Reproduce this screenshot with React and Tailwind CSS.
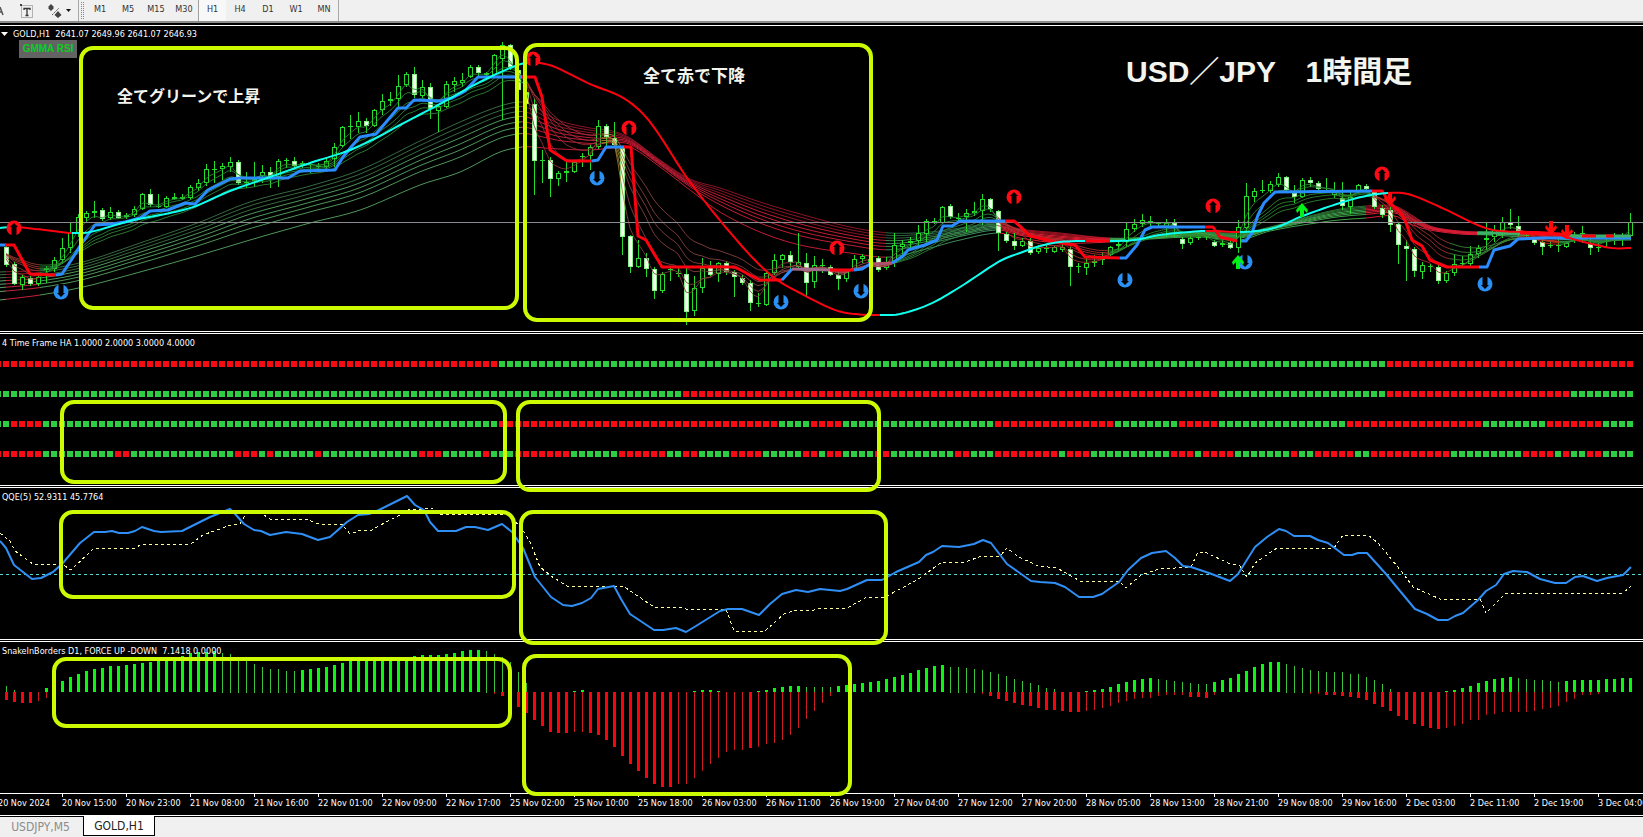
import React from "react";

const STEP = 8;
const FIRST = 6;
const barX = (i) => FIRST + i * STEP;

// [high, bodyTop, bodyBottom, low, filled]
const CANDLES = [
  [245,247,265,267,1],[262,264,284,285,1],[275,277,285,290,0],[276,278,284,286,1],[275,277,284,286,0],[266,268,270,283,0],[257,260,269,272,0],[238,248,260,264,0],
  [222,232,248,253,0],[214,217,233,237,0],[211,213,218,223,0],[201,211,213,218,0],[208,210,219,221,1],[207,212,218,220,0],[210,212,218,219,1],[213,215,217,219,0],
  [206,209,215,217,0],[193,194,209,210,0],[189,194,205,207,1],[194,206,207,208,0],[196,198,207,208,0],[193,197,199,200,0],[194,197,199,200,0],[185,187,198,200,0],
  [179,183,188,191,0],[164,169,183,186,0],[161,169,170,183,0],[163,166,169,180,0],[157,162,167,172,0],[160,162,183,185,1],[172,182,183,188,0],[162,179,181,187,0],
  [165,172,176,183,0],[167,172,177,188,1],[159,161,177,187,0],[158,160,161,168,0],[157,161,166,168,1],[161,163,165,168,0],[163,164,165,173,0],[163,166,167,172,0],
  [158,161,167,170,0],[143,147,159,167,0],[126,127,146,147,0],[115,126,127,139,0],[112,121,127,133,0],[118,121,126,133,1],[109,110,126,127,0],[94,101,110,115,0],
  [92,99,101,106,0],[75,86,99,107,0],[72,74,85,87,0],[67,74,95,98,1],[80,87,96,98,0],[83,87,109,119,1],[105,106,111,132,0],[81,84,107,108,0],
  [77,81,85,92,0],[73,80,83,87,0],[65,67,77,78,0],[65,67,73,77,1],[72,73,75,80,0],[54,55,75,77,0],[42,45,59,120,0],[44,45,67,70,1],
  [66,70,90,92,1],[86,92,104,106,1],[98,104,161,195,1],[150,160,161,183,0],[157,160,179,197,1],[171,173,179,186,0],[162,171,173,182,0],[160,162,172,173,0],
  [153,156,157,167,0],[145,147,156,170,0],[120,126,147,149,0],[124,126,137,148,1],[122,138,145,147,1],[147,148,237,255,1],[235,236,267,273,1],[240,258,267,268,0],
  [253,258,269,277,1],[267,269,291,299,1],[272,274,291,293,0],[268,269,270,281,0],[268,273,274,277,0],[268,274,312,325,1],[276,288,311,316,0],[258,268,288,293,0],
  [261,267,275,276,1],[262,263,274,282,0],[261,263,272,275,1],[270,272,277,297,1],[275,278,283,285,1],[280,283,303,311,1],[293,303,304,307,0],[272,273,305,306,0],
  [254,260,273,275,0],[254,255,260,268,0],[251,255,262,270,1],[233,262,267,269,0],[253,263,283,296,1],[256,265,282,288,0],[259,265,266,273,0],[265,267,275,276,1],
  [272,275,279,290,1],[270,272,279,282,0],[255,259,269,270,0],[254,256,259,263,0],[253,259,262,270,0],[256,258,270,272,1],[257,263,268,270,0],[233,245,263,267,0],
  [240,244,247,258,0],[237,241,243,250,0],[225,233,241,247,0],[219,221,234,242,0],[218,221,223,224,1],[206,207,223,224,0],[204,206,217,219,1],[213,218,219,223,0],
  [209,213,217,232,0],[202,211,213,216,0],[194,199,211,225,0],[198,199,209,212,1],[210,211,233,251,1],[232,234,241,243,1],[233,241,246,250,1],[238,241,246,247,0],
  [238,241,253,255,1],[245,248,252,254,0],[245,248,249,253,0],[246,247,252,253,0],[244,247,250,252,0],[247,249,267,286,1],[263,266,267,273,0],[257,263,268,275,0],
  [255,261,263,267,0],[252,257,260,265,0],[246,247,255,256,0],[240,244,246,250,0],[222,229,242,247,0],[219,224,229,232,0],[214,220,224,227,0],[216,221,222,228,0],
  [222,223,224,228,0],[219,223,228,237,0],[219,223,228,237,1],[237,239,244,249,1],[233,238,243,245,0],[233,237,238,240,0],[234,236,237,240,0],[240,242,246,247,1],
  [240,243,245,247,0],[241,243,248,249,1],[220,227,248,253,0],[183,196,228,231,0],[188,191,197,202,0],[180,190,191,193,0],[181,184,191,193,0],[173,177,185,187,0],
  [176,177,190,191,1],[185,193,197,203,1],[178,180,197,198,0],[177,180,183,187,1],[181,183,189,191,1],[178,190,191,192,0],[182,192,195,198,0],[182,198,206,210,1],
  [192,197,207,214,0],[184,185,191,192,0],[184,186,189,190,1],[190,192,207,209,1],[205,208,215,218,1],[207,210,225,232,1],[222,224,245,264,1],[240,246,249,281,1],
  [247,249,271,277,1],[262,265,272,279,0],[264,266,267,272,0],[265,267,281,284,1],[271,273,281,283,0],[255,264,273,276,0],[256,263,264,268,0],[246,254,264,267,0],
  [245,248,254,258,0],[222,238,240,250,0],[225,230,237,242,0],[217,222,231,238,0],[209,222,225,229,1],[216,226,231,237,1],[232,235,236,238,0],[237,239,243,245,1],
  [237,242,247,255,1],[240,245,246,248,0],[237,245,246,252,0],[241,243,247,248,0],[232,236,237,243,0],[226,233,234,243,0],[237,244,248,255,1],[242,247,248,252,0],
  [235,238,239,248,0],[233,236,237,245,0],[233,236,237,246,0],[213,222,236,240,0],
];

// Long-term ribbon envelope: [x, top, bottom]
const RIBBON = [
  [0,272,300],[40,270,295],[83,262,287],[140,243,272],[200,222,255],[250,202,240],[310,186,223],[360,170,210],[420,141,185],[460,122,172],
  [500,106,152],[522,102,147],[533,106,147],[545,113,148],[560,121,149],[590,128,150],[612,131,148],[630,138,147],[660,160,167],[690,179,190],
  [720,188,212],[760,202,232],[800,214,245],[850,227,253],[890,233,257],[930,232,248],[960,228,240],[998,223,233],[1020,229,238],[1060,233,243],
  [1110,238,242],[1150,237,239],[1200,232,237],[1240,233,240],[1270,227,231],[1330,211,221],[1366,206,218],[1395,206,216],[1410,214,224],
  [1430,226,230],[1460,231,234],[1490,232,235],[1540,232,238],[1580,235,240],[1631,236,240],
];

const LONG_RANGES = [
  [0,6,"#5f9f6b"],[6,40,"#c8203a"],[40,522,"#4f965a"],[522,886,"#c01c34"],[886,998,"#3f8a58"],[998,1110,"#e01c30"],[1110,1366,"#3fa04a"],[1366,1477,"#d81c34"],[1477,1525,"#3fa860"],[1525,1560,"#e01c20"],[1560,1631,"#3fa860"],
];
const SHORT_RANGES = [
  [6,40,"#9a3a30"],[40,526,"#2f8a38"],[526,602,"#9a3038"],[602,626,"#a08030"],[626,792,"#8a4444"],[792,896,"#a04a50"],[896,998,"#2f8a40"],[998,1110,"#b03030"],[1110,1374,"#2f8a30"],[1374,1450,"#a83030"],[1450,1518,"#3f8a3a"],[1518,1560,"#c03020"],[1560,1630,"#2f8a3a"],
];

// Cubic Hermite interpolation through the given points
function sample(points, x) {
  const last = points.length - 1;
  let i = 1;
  while (i < last && x > points[i][0]) i++;
  const slope = (n) => {
    const a = points[Math.max(0, n - 1)];
    const b = points[Math.min(last, n + 1)];
    return (b[1] - a[1]) / (b[0] - a[0]);
  };
  const [x0, y0] = points[i - 1];
  const [x1, y1] = points[i];
  const w = x1 - x0;
  const t = Math.min(1, Math.max(0, (x - x0) / w));
  const t2 = t * t;
  const t3 = t2 * t;
  return (2 * t3 - 3 * t2 + 1) * y0 + (t3 - 2 * t2 + t) * w * slope(i - 1) + (3 * t2 - 2 * t3) * y1 + (t3 - t2) * w * slope(i);
}

function slice(points, from, to) {
  const out = [];
  for (let x = from; x < to; x += 4) out.push(`${x},${sample(points, x).toFixed(1)}`);
  out.push(`${to},${sample(points, to).toFixed(1)}`);
  return out.join(" ");
}

function average(period) {
  const k = 2 / (period + 1);
  let value = 252;
  return CANDLES.map(([, top, bottom, , filled], i) => {
    value += k * ((filled ? bottom : top) - value);
    return [barX(i), value];
  });
}

const LONG_LINES = [0, 0.1, 0.21, 0.32, 0.44, 0.56, 0.7, 1].map((t) => RIBBON.map(([x, a, b]) => [x, a + (b - a) * t]));
const SHORT_LINES = [3, 5, 8, 10, 12, 15].map(average);

const BLUE = "#2b8cff";
const RED = "#ff0010";
const CYAN = "#10ffee";

const TREND = [
  [BLUE, "0,245 6,245"],
  [RED, "5,245 14,245 30,274 56,275"],
  [BLUE, "56,275 62,274 72,259 80,246 95,225 112,224 125,222 140,218 150,211 168,210 185,203 195,204 208,190 230,179 240,178 288,178 300,171 335,170 343,157 352,146 360,137 376,134 398,108 406,108 414,100 440,101 452,98 465,91 478,77 522,77"],
  [RED, "522,77 535,77 542,97 550,150 567,161 592,161"],
  [BLUE, "592,161 598,160 606,147 624,147"],
  [RED, "624,147 631,147 638,236 646,240 662,267 735,267 750,275 760,280 782,280"],
  [BLUE, "782,280 792,269"],
  ["#a06a8c", "792,269 830,270"],
  [RED, "830,270 854,270"],
  [BLUE, "854,270 862,269 870,264"],
  ["#b0506c", "870,264 892,263"],
  [BLUE, "892,263 903,256 908,250 925,245 937,240 943,226 952,226 960,221 1005,221"],
  [RED, "1005,221 1014,221 1022,228 1030,236 1060,243 1075,245 1085,257 1120,258"],
  [BLUE, "1120,258 1126,258 1137,245 1145,230 1152,227 1205,227"],
  [RED, "1205,227 1213,227 1220,237 1237,241"],
  [BLUE, "1241,241 1246,241 1252,233 1258,215 1264,203 1275,192 1372,191"],
  [RED, "1372,191 1382,191 1390,203 1400,212 1405,220 1412,240 1422,246 1430,260 1447,267 1479,267"],
  [BLUE, "1479,267 1487,267 1494,250 1510,246 1518,239 1540,238 1631,238"],
  ["#3fb06a", "1478,233 1520,233"],
  [RED, "1520,233 1560,234 1568,238"],
  ["#3fb06a", "1568,236 1631,236"],
  [RED, "1582,236 1596,236"],
  [RED, "1606,236 1614,236"],
];

const BASE = [
  [0,228],[15,227],[45,230],[72,233],[90,232],[130,221],[190,208],[230,191],[270,177],[310,163],[350,150],[380,136],[400,125],[440,104],
  [480,82],[510,68],[525,63],[540,63],[555,67],[590,84],[625,99],[650,122],[690,182],[740,244],[772,276],[800,293],[835,310],[855,314],
  [880,315],[900,314],[930,304],[960,287],[1000,261],[1020,253],[1040,246],[1060,242],[1085,241],[1110,241],[1135,240],[1160,235],
  [1205,231],[1240,232],[1265,230],[1280,226],[1300,217],[1340,203],[1366,196],[1388,193],[1408,194],[1440,207],[1480,226],[1500,231],
  [1550,233],[1580,241],[1612,248],[1631,248],
];
const BASE_RANGES = [
  [0,15,CYAN],[15,72,RED],[72,536,CYAN],[536,880,RED],[880,1085,CYAN],[1085,1110,RED],[1110,1205,CYAN],[1205,1240,RED],[1240,1388,CYAN],[1388,1631,RED],
];

const SELL_MARKS = [[14,228],[533,59],[629,128],[837,248],[1014,197],[1213,206],[1382,174]];
const BUY_MARKS = [[61,292],[597,178],[781,302],[861,291],[1125,280],[1245,262],[1485,284]];
const UP_ARROWS = [[1238,262],[1302,210]];
const DOWN_ARROWS = [[1390,199],[1551,228],[1567,232]];

const HA_ROWS = [
  { y: 364, ends: [["r",61],["g",172],["r",203]] },
  { y: 394, ends: [["g",84],["r",151],["g",172],["r",195],["g",203]] },
  { y: 424, ends: [["g",0],["r",4],["g",61],["r",96],["g",100],["r",104],["g",123],["r",138],["g",146],["r",151],["g",167],["r",184],["g",192],["r",199],["g",203]] },
  { y: 454, ends: [["r",4],["g",13],["r",15],["g",28],["r",31],["g",32],["r",33],["g",38],["r",39],["g",51],["r",54],["g",59],["r",60],["g",63],["r",70],["g",76],["r",82],["g",84],["r",86],["g",90],["r",94],["g",99],["r",101],["g",102],["r",104],["g",108],["r",110],["g",118],["r",120],["g",123],["r",131],["g",132],["r",135],["g",145],["r",148],["g",149],["r",153],["g",160],["r",161],["g",163],["r",168],["g",170],["r",180],["g",189],["r",193],["g",194],["r",195],["g",197],["r",199],["g",203]] },
];

const QQE_FAST =
  "0,541 6,548 14,565 32,579 41,578 53,572 62,564 80,543 94,532 105,532 112,531 119,533 128,533 135,531 142,527 154,531 161,532 182,531 196,524 210,517 230,509 236,515 244,524 254,530 261,531 270,535 286,532 302,534 318,540 330,537 347,522 358,515 369,514 379,510 395,502 407,496 415,505 424,510 430,522 438,531 456,531 466,527 475,527 488,530 502,524 512,532 523,548 535,577 551,597 563,605 572,606 582,603 591,598 598,589 614,586 621,599 630,614 654,630 663,630 676,628 686,632 696,626 720,611 728,609 742,609 759,615 770,604 782,594 796,590 808,592 820,589 840,591 847,589 867,580 882,580 896,572 919,562 926,555 933,552 942,546 959,547 974,544 983,540 991,543 1007,564 1031,581 1040,582 1055,583 1065,587 1079,597 1093,597 1102,594 1119,582 1128,570 1141,558 1152,553 1166,551 1175,558 1183,566 1191,567 1209,573 1230,581 1238,574 1255,547 1267,537 1279,529 1286,531 1294,536 1310,536 1318,540 1328,543 1344,555 1352,555 1358,553 1367,553 1386,574 1400,591 1415,609 1427,614 1438,620 1448,620 1455,616 1463,613 1478,600 1486,591 1496,585 1504,574 1513,571 1527,572 1540,579 1555,583 1566,583 1575,577 1583,576 1597,581 1607,578 1623,575 1631,567";
const QQE_SLOW =
  "0,533 10,541 15,551 33,564 62,564 71,570 94,548 135,548 142,544 191,544 203,535 228,526 240,524 244,517 250,512 261,513 270,519 305,519 319,524 342,524 350,534 361,530 372,530 386,522 400,515 408,510 425,509 432,508 438,514 507,514 521,527 530,542 540,567 551,576 567,586 623,586 654,607 682,607 686,609 726,609 734,631 765,631 784,614 796,610 814,610 821,608 847,608 867,597 886,597 896,591 917,580 942,562 965,562 982,556 1000,556 1007,548 1019,557 1038,566 1057,568 1080,581 1119,581 1126,588 1141,575 1159,569 1191,567 1198,552 1205,552 1228,563 1240,566 1247,577 1255,563 1277,548 1334,548 1343,535 1368,535 1378,543 1402,572 1413,587 1440,599 1480,599 1486,613 1505,594 1511,593 1623,593 1631,586";

// Histogram runs: [first bar, wide bars?, bar ends measured from the zero line]
const FORCE_UP = [
  [0,0,[6,2]],[5,1,[4]],
  [7,1,[11,15,18,21,23,24,26,26,27,28,29,30,31,32,33,36,39,40,40,41]],
  [27,0,[39,38,34,31,28,25,23,23,21,21]],
  [37,1,[22,23,24,25,27,29,31,32,33,33,34,34,35,35,36,37,37,37,38,39,41,42,42]],
  [60,0,[41,38,35,30,20,9]],
  [71,1,[1,2]],[86,1,[1,2,2,1]],[94,1,[1,2,4,5,6,6]],[100,0,[5,5,5,5]],
  [104,1,[6,7,8,9,10,11,13,15,17,19,22,24,26,27]],
  [118,0,[25,25,24,23,22,20,18,16,13,11,9,7,4,3]],
  [135,1,[1,2,3,5,8,10,12,13,14]],[144,0,[13,12,11,10,9,8,8]],
  [151,1,[10,12,14,18,21,25,28,30,30]],[160,0,[28,26,24,22,21,20,20,20,18,18,15,12,8,3]],
  [180,1,[1,2,4,6,9,11,13,14,15]],[189,0,[14,13,12,12,11,10]],[195,1,[11,12,12,12,12,13,13,14,14]],
];
const FORCE_DOWN = [
  [0,1,[8,10,11,11]],[4,0,[9,6]],[61,0,[2]],[62,1,[4,9,15,21,28,34,40,41,41]],
  [71,0,[40,40]],[73,1,[41,43,48,55,64,72,79,86,92,95,95]],
  [84,0,[92,92,86,79,72,66,60,58,58]],[93,1,[56]],
  [94,0,[55,52,51,48,43,36,27,19,11,4]],
  [122,0,[2]],[123,1,[4,7,9,11,13,14,16,18,18,19,20,20]],
  [135,0,[19,18,16,14,11,9,7,6,6,4,3,3,3]],[148,1,[5,5,6]],[151,0,[3]],
  [163,0,[2,2]],[165,1,[3,3,4,5,6,8,12,15,19,24,28,32,34,36,37]],
  [180,0,[36,34,32,28,28,23,22,20,20,20,20,19,17,16,14,10,7,3,3,2]],
];

const TIMES = [
  "20 Nov 2024","20 Nov 15:00","20 Nov 23:00","21 Nov 08:00","21 Nov 16:00","22 Nov 01:00","22 Nov 09:00","22 Nov 17:00","25 Nov 02:00",
  "25 Nov 10:00","25 Nov 18:00","26 Nov 03:00","26 Nov 11:00","26 Nov 19:00","27 Nov 04:00","27 Nov 12:00","27 Nov 20:00","28 Nov 05:00",
  "28 Nov 13:00","28 Nov 21:00","29 Nov 08:00","29 Nov 16:00","2 Dec 03:00","2 Dec 11:00","2 Dec 19:00","3 Dec 04:00",
];

const PERIODS = ["M1", "M5", "M15", "M30", "H1", "H4", "D1", "W1", "MN"];

const UI = "font-['DejaVu_Sans_Condensed','DejaVu_Sans',sans-serif]";
const JP = "font-['Noto_Sans_CJK_JP',sans-serif]";

function Lines({ items, width }) {
  return items.map(([color, points], i) => (
    <polyline key={i} points={points} fill="none" stroke={color} strokeWidth={width} strokeLinejoin="round" />
  ));
}

function Candle({ i, data }) {
  const [high, top, bottom, low, filled] = data;
  const x = barX(i);
  const flat = bottom - top < 3;
  return (
    <g shapeRendering="crispEdges">
      <rect x={x} y={high} width="1" height={low - high} fill="#22dd2a" />
      {flat ? (
        <rect x={x - 2} y={top} width="5" height={bottom - top} fill="#22dd2a" />
      ) : (
        <rect x={x - 1.5} y={top + 0.5} width="4" height={bottom - top - 1} fill={filled ? "#f4fff0" : "#000"} stroke={filled ? "#8cf08c" : "#22dd2a"} />
      )}
    </g>
  );
}

function Mark({ x, y, down }) {
  return (
    <g transform={`translate(${x} ${y}) scale(1 ${down ? -1 : 1})`}>
      <circle r="7.5" fill={down ? "#2b90f4" : "#ff0a14"} />
      <path d="M0,-5 L4,-1 L2.5,-1 L2.5,8 L-2.5,8 L-2.5,-1 L-4,-1 Z" fill="#000" />
    </g>
  );
}

function Arrow({ x, y, down }) {
  return (
    <g transform={`translate(${x} ${y}) scale(1 ${down ? -1 : 1})`}>
      <path d="M0,-7 L6,0 L5,3 L2,0 L2,7 L-2,7 L-2,0 L-5,3 L-6,0 Z" fill={down ? "#ff0a0a" : "#00f018"} />
    </g>
  );
}

function Highlight({ className }) {
  return <div className={`pointer-events-none absolute rounded-[14px] border-4 border-[#ccfa00] ${className}`} />;
}

function Divider() {
  return <div className="h-[3px] shrink-0 border-y border-white" />;
}

function PricePanel() {
  return (
    <section className="relative h-[305px] overflow-hidden">
      <svg className="block h-full w-full" aria-hidden="true">
        <g transform="translate(0 -26)">
          {LONG_LINES.map((line, k) =>
            LONG_RANGES.map(([a, b, color]) => (
              <polyline key={`${k}-${a}`} points={slice(line, a, b)} fill="none" stroke={color} strokeWidth="1" opacity={k < 3 ? 0.7 : 1} />
            ))
          )}
          {CANDLES.map((data, i) => (
            <Candle key={i} i={i} data={data} />
          ))}
          {SHORT_LINES.map((line, k) =>
            SHORT_RANGES.map(([a, b, color]) => (
              <polyline key={`${k}-${a}`} points={slice(line, a, b)} fill="none" stroke={color} strokeWidth="1" opacity="0.85" />
            ))
          )}
          <rect x="0" y="222" width="100%" height="1" fill="#8a8a90" />
          <Lines items={TREND} width={3} />
          {BASE_RANGES.map(([a, b, color]) => (
            <polyline key={a} points={slice(BASE, a, b)} fill="none" stroke={color} strokeWidth="2" />
          ))}
          {SELL_MARKS.map(([x, y]) => <Mark key={x} x={x} y={y} />)}
          {BUY_MARKS.map(([x, y]) => <Mark key={x} x={x} y={y} down />)}
          {UP_ARROWS.map(([x, y]) => <Arrow key={x} x={x} y={y} />)}
          {DOWN_ARROWS.map(([x, y]) => <Arrow key={x} x={x} y={y} down />)}
        </g>
      </svg>
      <div className="absolute left-0 top-0 flex h-4 items-center pl-[1px] text-[9px] leading-none text-white">
        <svg className="mr-[5px] h-[4px] w-[7px]" viewBox="0 0 7 4" aria-hidden="true"><path d="M0,0 H7 L3.5,4 Z" fill="#fff" /></svg>
        <span className="whitespace-pre">GOLD,H1  2641.07 2649.96 2641.07 2646.93</span>
      </div>
      <div className="absolute left-[19px] top-[14px] flex h-[18px] w-[58px] items-center justify-center bg-[#636363] font-['Liberation_Sans',sans-serif] text-[10px] leading-none font-bold text-[#10cc20]">
        GMMA RSI
      </div>
      <p className={`absolute left-[117px] top-[57px] text-[16px] leading-6 font-bold text-[#f4f4ee] ${JP}`}>全てグリーンで上昇</p>
      <p className={`absolute left-[643px] top-[37px] text-[17px] leading-6 font-bold text-[#f4f4ee] ${JP}`}>全て赤で下降</p>
      <h1 className="absolute left-[1126px] top-[26px] text-[30px] leading-10 font-bold whitespace-nowrap text-[#f4f4ee] font-['Liberation_Sans','Noto_Sans_CJK_JP',sans-serif]">USD／JPY　1時間足</h1>
    </section>
  );
}

function HeikinPanel() {
  return (
    <section className="relative h-[151px] overflow-hidden">
      <svg className="block h-full w-full" aria-hidden="true">
        <g transform="translate(0 -334)" shapeRendering="crispEdges">
          {HA_ROWS.map(({ y, ends }) => {
            const cells = [];
            let i = -1;
            ends.forEach(([tone, end]) => {
              for (; i <= end; i++) {
                cells.push(<rect key={i} x={barX(i) - 3} y={y - 3} width="6" height="6" fill={tone === "g" ? "#2ecc40" : "#f60a14"} />);
              }
            });
            return <g key={y}>{cells}</g>;
          })}
        </g>
      </svg>
      <span className="absolute left-[2px] top-[5px] text-[9px] leading-none text-white">4 Time Frame HA 1.0000 2.0000 3.0000 4.0000</span>
    </section>
  );
}

function QqePanel() {
  return (
    <section className="relative h-[151px] overflow-hidden">
      <svg className="block h-full w-full" aria-hidden="true">
        <g transform="translate(0 -488)">
          <line x1="0" y1="574.5" x2="100%" y2="574.5" stroke="#5cd8d4" strokeDasharray="3 3" />
          <polyline points={QQE_SLOW} fill="none" stroke="#ffffa0" strokeWidth="1" strokeDasharray="3 3" shapeRendering="crispEdges" />
          <polyline points={QQE_FAST} fill="none" stroke="#2f8ff5" strokeWidth="2" strokeLinejoin="round" />
        </g>
      </svg>
      <span className="absolute left-[2px] top-[5px] text-[9px] leading-none text-white">QQE(5) 52.9311 45.7764</span>
    </section>
  );
}

function ForcePanel() {
  const bars = (runs, up) =>
    runs.flatMap(([start, wide, sizes]) =>
      sizes.map((size, k) => {
        const x = barX(start + k);
        return (
          <rect
            key={`${start}-${k}`}
            x={wide ? x - 1 : x}
            y={up ? 692 - size : 692}
            width={wide ? 3 : 1}
            height={size + (up && !wide ? 1 : 0)}
            fill={up ? (wide ? "#08f810" : "#3cc43c") : wide ? "#f8040c" : "#cc1c20"}
          />
        );
      })
    );
  return (
    <section className="relative h-[151px] overflow-hidden">
      <svg className="block h-full w-full" aria-hidden="true">
        <g transform="translate(0 -642)" shapeRendering="crispEdges">
          {bars(FORCE_UP, true)}
          {bars(FORCE_DOWN, false)}
        </g>
      </svg>
      <span className="absolute left-[2px] top-[5px] text-[9px] leading-none whitespace-pre text-white">SnakeInBorders D1, FORCE UP -DOWN  7.1418 0.0000</span>
    </section>
  );
}

function Toolbar() {
  return (
    <header className="flex h-[21px] shrink-0 items-stretch overflow-hidden bg-[#f0f0f0] text-[9px] text-[#333]">
      <div className="flex w-[79px] items-center border-r border-[#a8a8a8]">
        <button type="button" aria-label="Text" className="w-[20px] text-left">
          <svg className="h-[18px] w-[4px]" viewBox="0 0 4 18" aria-hidden="true"><path d="M0,5 L3,13 M0,10 H2" stroke="#555" fill="none" strokeWidth="1.5" /></svg>
        </button>
        <button type="button" aria-label="Text label" className="w-[27px]">
          <svg className="h-[16px] w-[14px]" viewBox="0 0 14 16" aria-hidden="true">
            <rect x="1.5" y="2.5" width="11" height="12" fill="none" stroke="#777" strokeDasharray="1 1" />
            <path d="M4,7 V5.5 H10 V7 M7,5 V12 M5.5,12.5 H8.5" stroke="#333" fill="none" strokeWidth="1.3" />
            <rect x="0" y="1" width="2" height="2" fill="#444" />
          </svg>
        </button>
        <button type="button" aria-label="Shapes" className="flex w-[26px] items-center gap-[4px]">
          <svg className="h-[16px] w-[15px]" viewBox="0 0 15 16" aria-hidden="true">
            <path d="M4,1 L7,4 L4,7 L1,4 Z M1,5 H7 L4,8 Z M11,8 L14.5,12 L11,15 L7.5,12 Z" fill="#444" />
            <path d="M5,12 L12,5" stroke="#555" strokeDasharray="2 1" />
          </svg>
          <svg className="h-[3px] w-[5px]" viewBox="0 0 5 3" aria-hidden="true"><path d="M0,0 H5 L2.5,3 Z" fill="#111" /></svg>
        </button>
      </div>
      <div className="flex w-[260px] items-stretch border-r border-[#a8a8a8] pl-[2px]">
        <div className="my-[2px] mr-[2px] w-[3px] border-x border-dotted border-[#888]" />
        <nav aria-label="Timeframes" className="flex">
          {PERIODS.map((p) => (
            <button
              key={p}
              type="button"
              aria-pressed={p === "H1"}
              className={`w-[28px] pb-[2px] text-center leading-none ${p === "H1" ? "border-l border-[#a0a0a0] bg-[#f8f8f8]" : ""}`}
            >
              {p}
            </button>
          ))}
        </nav>
      </div>
    </header>
  );
}

export default function App() {
  return (
    <div className={`flex min-h-screen flex-col bg-[#f0f0f0] ${UI}`}>
      <Toolbar />
      <div className="h-[2px] shrink-0 bg-[#8c8c8c]" />
      <main className="relative flex flex-col overflow-hidden bg-black pt-[2px] text-[#f0f0f0]">
        <div className="h-px shrink-0 bg-white" />
        <PricePanel />
        <Divider />
        <HeikinPanel />
        <Divider />
        <QqePanel />
        <Divider />
        <ForcePanel />
        <div className="h-[22px] overflow-hidden border-t border-white">
          <ol className="-ml-[2px] flex text-[9px] text-white">
            {TIMES.map((t) => (
              <li key={t} className="w-16 shrink-0 whitespace-nowrap leading-none">
                <div className="h-[3px] w-px bg-white" />
                <time className="mt-[2px] block">{t}</time>
              </li>
            ))}
          </ol>
        </div>
        <Highlight className="left-[79px] top-[23px] h-[264px] w-[440px]" />
        <Highlight className="left-[523px] top-[20px] h-[279px] w-[350px]" />
        <Highlight className="left-[60px] top-[377px] h-[84px] w-[447px]" />
        <Highlight className="left-[516px] top-[377px] h-[92px] w-[365px]" />
        <Highlight className="left-[59px] top-[487px] h-[89px] w-[457px]" />
        <Highlight className="left-[519px] top-[487px] h-[135px] w-[369px]" />
        <Highlight className="left-[52px] top-[634px] h-[71px] w-[460px]" />
        <Highlight className="left-[522px] top-[631px] h-[142px] w-[330px]" />
      </main>
      <footer className="border-t border-white bg-[#f0f0f0]">
        <nav aria-label="Charts" className="flex h-5 border-t border-black text-[12px] leading-none">
          <button type="button" className="w-[83px] pr-[2px] text-center text-[#8c8c8c]">USDJPY,M5</button>
          <button type="button" aria-current="page" className="-mt-px w-[72px] border-x border-b border-black bg-white text-center text-[#222]">GOLD,H1</button>
        </nav>
      </footer>
    </div>
  );
}
